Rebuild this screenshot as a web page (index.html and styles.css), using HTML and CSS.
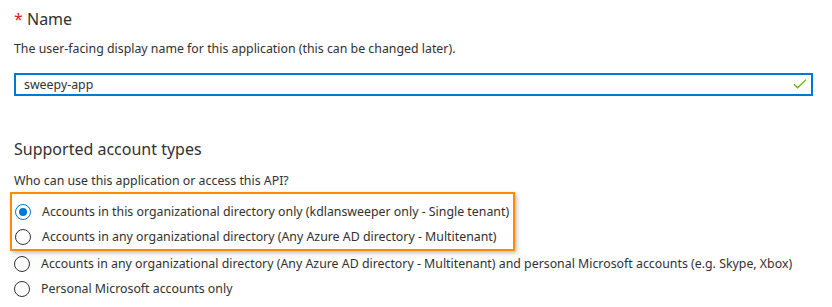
FILE: index.html
```html
<!DOCTYPE html>
<html lang="en">
<head>
  <meta charset="UTF-8">
  <title>Register an application</title>
  <link rel="stylesheet" href="styles.css">
</head>
<body>
  <div class="form">
    <div class="section">
      <h3 class="label"><span class="req">*</span> Name</h3>
      <p class="hint">The user-facing display name for this application (this can be changed later).</p>
      <div class="field">
        <input type="text" value="sweepy-app">
        <svg class="check" width="14" height="10" viewBox="0 0 14 10">
          <path d="M1 5.2 L4.6 8.8 L13 0.6" fill="none" stroke="#6bb700" stroke-width="1.3"/>
        </svg>
      </div>
    </div>

    <div class="section accounts">
      <h3 class="label">Supported account types</h3>
      <p class="hint">Who can use this application or access this API?</p>
      <div class="highlight">
        <label class="option"><span class="radio checked"></span>Accounts in this organizational directory only (kdlansweeper only - Single tenant)</label>
        <label class="option"><span class="radio"></span>Accounts in any organizational directory (Any Azure AD directory - Multitenant)</label>
      </div>
      <label class="option"><span class="radio"></span>Accounts in any organizational directory (Any Azure AD directory - Multitenant) and personal Microsoft accounts (e.g. Skype, Xbox)</label>
      <label class="option"><span class="radio"></span>Personal Microsoft accounts only</label>
    </div>
  </div>
</body>
</html>
```

FILE: styles.css
```css
body {
  margin: 0;
  background: #fff;
  font-family: "Noto Sans", "Open Sans", sans-serif;
  color: #323130;
}
.form {
  padding: 8px 19px 0 14px;
}
.label {
  margin: 0;
  font-size: 16px;
  font-weight: normal;
  line-height: 22px;
}
.req { color: #e02020; }
.hint {
  margin: 10px 0 0;
  font-size: 12.35px;
  line-height: 18px;
}
.field {
  position: relative;
  margin-top: 14px;
}
.field input {
  box-sizing: border-box;
  width: 100%;
  height: 23px;
  margin: 0;
  padding: 0 8px;
  border: 2px solid #0078d4;
  font-family: inherit;
  font-size: 12.35px;
  color: #323130;
  outline: none;
}
.check {
  position: absolute;
  right: 6px;
  top: 7px;
}
.accounts { margin-top: 42px; }
.accounts .hint { margin-top: 12px; }
.highlight {
  width: 498px;
  margin: 2px 0 0 -4px;
  padding: 5px 0 0 3px;
  border: 2px solid #ff8c00;
  box-shadow: 2px 2px 4px rgba(0,0,0,0.25);
}
.option {
  display: flex;
  align-items: center;
  height: 25px;
  font-size: 12.35px;
  white-space: nowrap;
}
.radio {
  box-sizing: border-box;
  width: 16px;
  height: 16px;
  margin: 0 11px 0 0;
  border: 1px solid #323130;
  border-radius: 50%;
  flex: none;
  position: relative;
}
.radio.checked { border-color: #0078d4; }
.radio.checked::after {
  content: "";
  position: absolute;
  left: 3px;
  top: 3px;
  width: 8px;
  height: 8px;
  border-radius: 50%;
  background: #0078d4;
}
```
